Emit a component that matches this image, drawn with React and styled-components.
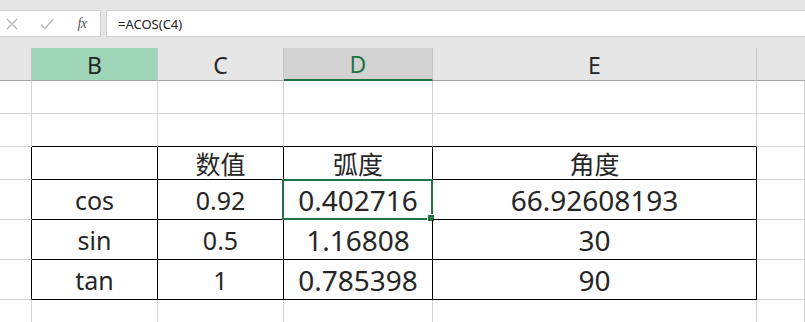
import React from "react";
import styled, { createGlobalStyle } from "styled-components";

const Global = createGlobalStyle`
  html, body { margin: 0; padding: 0; background: #fff; }
  body { font-family: "Noto Sans", "Noto Sans CJK SC", sans-serif; overflow: hidden; }
`;

const Page = styled.div`
  width: 805px;
  height: 322px;
  overflow: hidden;
  background: #fff;
`;

const Top = styled.div`
  height: 48px;
  background: #e6e6e6;
  box-sizing: border-box;
  padding-top: 10px;
  display: flex;
  gap: 5px;
`;

const NameTools = styled.div`
  width: 101px;
  height: 27px;
  box-sizing: border-box;
  background: #fff;
  border: 1px solid #d0d0d0;
  border-left: none;
  display: flex;
  align-items: center;
  padding-left: 2px;
  gap: 15px;
`;

const ToolIcon = styled.span`
  width: 20px;
  display: flex;
  justify-content: center;
  align-items: center;
`;

const Fx = styled.span`
  font-family: "Liberation Serif", serif;
  font-style: italic;
  font-size: 14px;
  color: #595959;
  letter-spacing: -0.5px;
`;

const FormulaInput = styled.div`
  flex: 1;
  height: 27px;
  box-sizing: border-box;
  background: #fff;
  border: 1px solid #d0d0d0;
  border-right: none;
  display: flex;
  align-items: center;
  padding-left: 11px;
  font-size: 13px;
  color: #222;
`;

const Sheet = styled.div`
  display: grid;
  grid-template-columns: 32px 126px 126px 149px 324px 1fr;
  grid-template-rows: 33px 33px 33px 33px 40px 40px 40px 40px;
`;

const Head = styled.div`
  box-sizing: border-box;
  background: ${(p) => (p.$state === "range" ? "#9fd5b7" : p.$state === "active" ? "#d2d2d2" : "#e6e6e6")};
  border-right: 1px solid ${(p) => (p.$last ? "transparent" : "#c4c4c4")};
  border-bottom: ${(p) => (p.$state === "active" ? "2px solid #217346" : "1px solid #a6a6a6")};
  display: flex;
  align-items: center;
  justify-content: center;
  font-size: 23px;
  padding-top: 1px;
  color: ${(p) => (p.$state === "active" ? "#217346" : "#262626")};
`;

const Cell = styled.div`
  position: relative;
  box-sizing: border-box;
  border-right: 1px solid ${(p) => (p.$right ? "#000" : "#d4d4d4")};
  border-bottom: 1px solid ${(p) => (p.$bottom ? "#000" : "#d4d4d4")};
  display: flex;
  align-items: center;
  justify-content: center;
  font-size: ${(p) => p.$size || 25}px;
  color: #262626;
  white-space: nowrap;
`;

const Selection = styled.div`
  position: absolute;
  left: -2px;
  top: -1px;
  right: -1px;
  bottom: -1px;
  border: 2px solid #217346;
  pointer-events: none;
`;

const Handle = styled.div`
  position: absolute;
  right: -4px;
  bottom: -4px;
  width: 6px;
  height: 6px;
  background: #217346;
  border: 1px solid #fff;
`;

const columns = ["B", "C", "D", "E"];

const rows = [
  ["", "数值", "弧度", "角度"],
  ["cos", "0.92", "0.402716", "66.92608193"],
  ["sin", "0.5", "1.16808", "30"],
  ["tan", "1", "0.785398", "90"],
];

// sheet rows under the column header; the table begins on the third one
const TABLE_START = 2;

export default function App() {
  const cells = [];
  for (let r = 0; r < 7; r++) {
    const t = r - TABLE_START;
    const inTable = t >= 0 && t < rows.length;
    const aboveTable = r === TABLE_START - 1;
    for (let c = 0; c < 6; c++) {
      const key = `${r}-${c}`;
      const tableCol = c >= 1 && c <= 4;
      const right = inTable && c <= 4;
      const bottom = tableCol && (inTable || aboveTable);
      let content = null;
      let size = 25;
      if (inTable && tableCol) {
        content = rows[t][c - 1];
        // the computed columns D and E are set larger
        if (t > 0 && c >= 3) size = 28;
      }
      const selected = t === 1 && c === 3;
      cells.push(
        <Cell key={key} $right={right} $bottom={bottom} $size={size}>
          {content}
          {selected && (
            <Selection>
              <Handle />
            </Selection>
          )}
        </Cell>
      );
    }
  }

  return (
    <Page>
      <Global />
      <Top>
        <NameTools>
          <ToolIcon>
            <svg width="12" height="12" viewBox="0 0 12 12">
              <path d="M1 1 L11 11 M11 1 L1 11" stroke="#b4b4b4" strokeWidth="1.3" fill="none" />
            </svg>
          </ToolIcon>
          <ToolIcon>
            <svg width="14" height="12" viewBox="0 0 14 12">
              <path d="M1 6.5 L5 10.5 L13 1.5" stroke="#b4b4b4" strokeWidth="1.5" fill="none" />
            </svg>
          </ToolIcon>
          <ToolIcon>
            <Fx>fx</Fx>
          </ToolIcon>
        </NameTools>
        <FormulaInput>=ACOS(C4)</FormulaInput>
      </Top>
      <Sheet>
        <Head />
        {columns.map((c) => (
          <Head key={c} $state={c === "B" ? "range" : c === "D" ? "active" : undefined}>
            {c}
          </Head>
        ))}
        <Head $last />
        {cells}
      </Sheet>
    </Page>
  );
}
